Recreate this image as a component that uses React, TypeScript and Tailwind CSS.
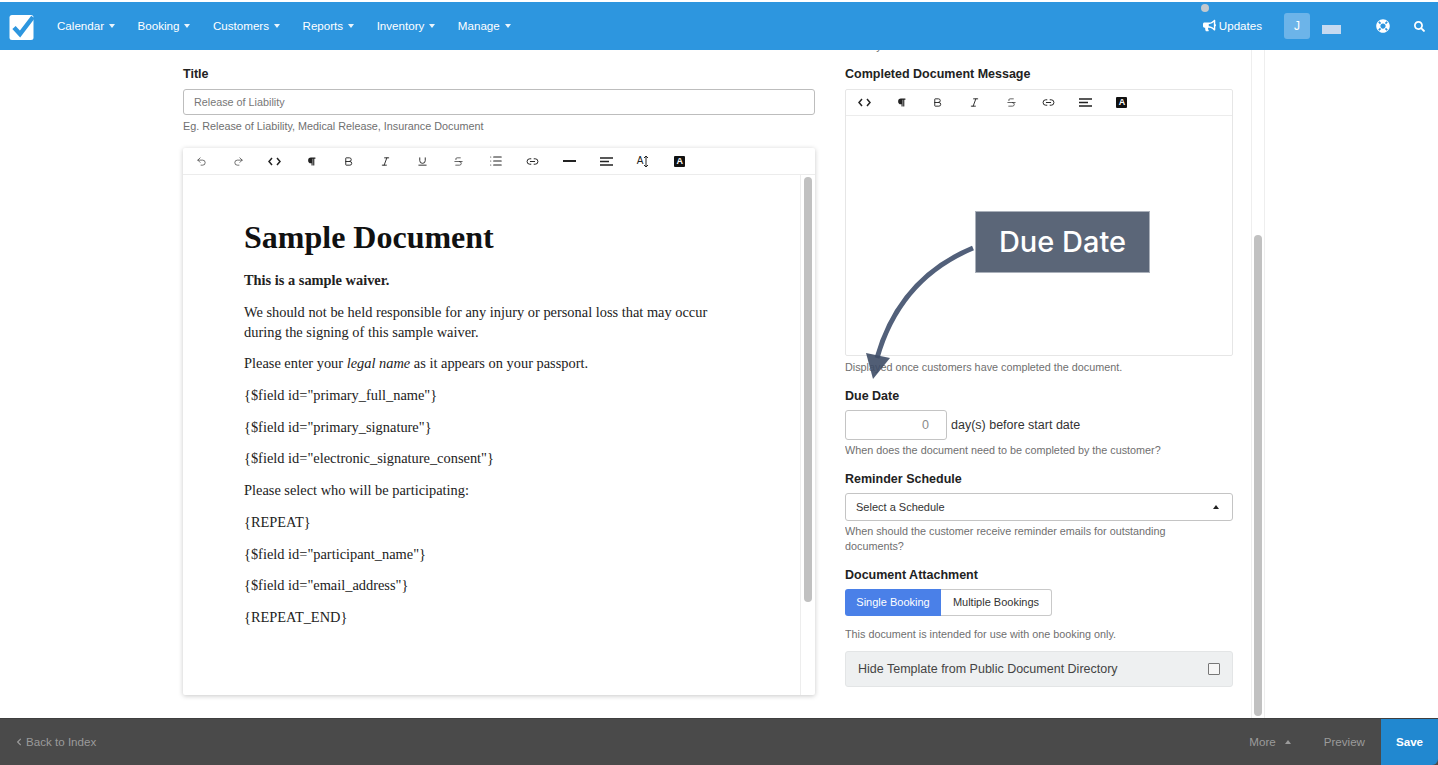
import React from "react";
import { FaBullhorn, FaLifeRing, FaSearch, FaParagraph, FaChevronLeft } from "react-icons/fa";
import { Undo2, Redo2, Bold, Italic, Underline, Strikethrough, List, Link2, AlignLeft } from "lucide-react";

const Caret = ({ up = false, cls = "" }: { up?: boolean; cls?: string }) => (
  <span className={`inline-block w-0 h-0 border-x-[3.5px] border-x-transparent ${up ? "border-b-[4px] border-b-current" : "border-t-[4px] border-t-current"} ${cls}`} />
);

const Code = () => (
  <svg width="13" height="9" viewBox="0 0 13 9" fill="none" stroke="#222" strokeWidth="1.5"><path d="M4 1 1 4.5 4 8M9 1l3 3.5L9 8" /></svg>
);
const HLine = () => <span className="block w-[13px] h-[2px] bg-[#222]" />;
const Align = () => (
  <svg width="13" height="9" viewBox="0 0 13 9" stroke="#222" strokeWidth="1.4"><path d="M0 1h13M0 4.5h9M0 8h13" /></svg>
);
const BulletList = () => <List size={14} strokeWidth={1.8} color="#222" />;
const Size = () => (
  <span className="flex items-center text-[10px] leading-none text-[#222]">A<svg width="6" height="11" viewBox="0 0 6 11" fill="none" stroke="#222" strokeWidth="1"><path d="M3 0v11M1 2l2-2 2 2M1 9l2 2 2-2" /></svg></span>
);
const BlackA = () => (
  <span className="flex items-center justify-center w-[11px] h-[11px] bg-[#111] rounded-[1px] text-white text-[9px] font-bold leading-none">A</span>
);
const ic = { size: 11, strokeWidth: 2, color: "#222" };

const main = [
  <Undo2 key="u" size={11} strokeWidth={1.5} color="#333" />,
  <Redo2 key="r" size={11} strokeWidth={1.5} color="#333" />,
  <Code key="c" />,
  <FaParagraph key="p" size={9} color="#222" />,
  <Bold key="b" {...ic} />,
  <Italic key="i" {...ic} />,
  <Underline key="un" {...ic} />,
  <Strikethrough key="s" {...ic} strokeWidth={1.5} />,
  <BulletList key="l" />,
  <Link2 key="k" size={13} strokeWidth={1.8} color="#222" />,
  <HLine key="h" />,
  <Align key="a" />,
  <Size key="z" />,
  <BlackA key="x" />,
];
const small = [
  <Code key="c" />,
  <FaParagraph key="p" size={9} color="#222" />,
  <Bold key="b" {...ic} />,
  <Italic key="i" {...ic} />,
  <Strikethrough key="s" {...ic} strokeWidth={1.5} />,
  <Link2 key="k" size={13} strokeWidth={1.8} color="#222" />,
  <Align key="a" />,
  <BlackA key="x" />,
];

const Toolbar = ({ items, h }: { items: React.ReactNode[]; h: string }) => (
  <div className={`flex items-center ${h} border-b border-[#ececec]`}>
    {items.map((it, i) => (
      <span key={i} className="w-[36.8px] flex justify-center items-center">{it}</span>
    ))}
  </div>
);

const Label = ({ children }: { children: React.ReactNode }) => (
  <div className="text-[12.5px] leading-[15px] font-bold text-[#222]">{children}</div>
);
const Hint = ({ children, cls = "" }: { children: React.ReactNode; cls?: string }) => (
  <div className={`text-[10.8px] leading-[15px] text-[#6f6f6f] ${cls}`}>{children}</div>
);
const P = ({ children }: { children: React.ReactNode }) => (
  <p className="mb-[11.7px]">{children}</p>
);

const nav = ["Calendar", "Booking", "Customers", "Reports", "Inventory", "Manage"];

export default function App() {
  return (
    <div className="relative h-[765px] w-[1438px] overflow-hidden flex flex-col bg-white font-['Liberation_Sans',sans-serif]">
      <header className="mt-[2px] h-[48px] shrink-0 bg-[#2d96df] flex items-center text-white z-10 relative">
        <svg className="ml-[9px]" width="27" height="28" viewBox="0 0 27 28">
          <rect x="0.5" y="3" width="24" height="25" rx="2.5" fill="#fff" />
          <path d="M5 15.5l6 6.5L24 5" fill="none" stroke="#2d96df" strokeWidth="4.5" />
        </svg>
        <nav className="ml-[21px] flex items-center gap-[22.5px] text-[11.6px]">
          {nav.map((n) => (
            <span key={n} className="flex items-center gap-[5px]">
              {n}
              <Caret cls="text-white/90" />
            </span>
          ))}
        </nav>
        <div className="ml-auto flex items-center">
          <span className="relative flex items-center gap-[3px] text-[11.6px]">
            <span className="absolute -left-[2px] -top-[13px] w-[8px] h-[8px] rounded-full bg-[#c3c9ce]" />
            <FaBullhorn size={13} />
            Updates
          </span>
          <span className="ml-[22px] w-[26px] h-[26px] rounded-[3px] bg-[#6cb4e9] flex items-center justify-center text-[12px]">J</span>
          <span className="ml-[12px] mt-[6px] w-[19px] h-[9px] bg-[#c5d9f0]" />
          <FaLifeRing size={14} className="ml-[35px]" />
          <FaSearch size={11} className="ml-[24px] mr-[13px]" />
        </div>
      </header>

      <main className="flex-1 min-h-0 flex">
        <section className="ml-[183px] w-[632px] pt-[17px]">
          <Label>Title</Label>
          <div className="mt-[7px] h-[26px] border border-[#bdbdbd] rounded-[3px] flex items-center px-[10px] text-[10.8px] text-[#777]">Release of Liability</div>
          <Hint cls="mt-[4px]">Eg. Release of Liability, Medical Release, Insurance Document</Hint>
          <div className="mt-[14px] h-[547px] flex flex-col rounded-[2px] shadow-[0_1px_5px_rgba(0,0,0,0.22)]">
            <Toolbar items={main} h="h-[27px]" />
            <div className="flex-1 min-h-0 flex">
              <div className="flex-1 pl-[61px] pt-[44px] pr-[70px] font-['Liberation_Serif',serif] text-[14.4px] leading-[20px] text-[#222]">
                <h1 className="text-[32px] leading-[36px] font-bold text-[#111] mb-[15px]">Sample Document</h1>
                <P><b>This is a sample waiver.</b></P>
                <P>We should not be held responsible for any injury or personal loss that may occur during the signing of this sample waiver.</P>
                <P>Please enter your <i>legal name</i> as it appears on your passport.</P>
                <P>{'{$field id="primary_full_name"}'}</P>
                <P>{'{$field id="primary_signature"}'}</P>
                <P>{'{$field id="electronic_signature_consent"}'}</P>
                <P>Please select who will be participating:</P>
                <P>{"{REPEAT}"}</P>
                <P>{'{$field id="participant_name"}'}</P>
                <P>{'{$field id="email_address"}'}</P>
                <P>{"{REPEAT_END}"}</P>
              </div>
              <div className="w-[15px] shrink-0 border-l border-[#ededed] pl-[3px] pt-[2px]">
                <div className="w-[8px] h-[425px] rounded-full bg-[#c1c1c1]" />
              </div>
            </div>
          </div>
        </section>

        <section className="ml-[30px] w-[388px] overflow-hidden">
          <Hint cls="-mt-[11px]">Conveys to customers what this document is about.</Hint>
          <div className="mt-[13px]"><Label>Completed Document Message</Label></div>
          <div className="mt-[7px] h-[267px] border border-[#e6e6e6] rounded-[2px] flex flex-col">
            <Toolbar items={small} h="h-[26px]" />
          </div>
          <Hint cls="mt-[4px]">Displayed once customers have completed the document.</Hint>
          <div className="mt-[14px]"><Label>Due Date</Label></div>
          <div className="mt-[6px] flex items-center gap-[4px]">
            <div className="w-[102px] h-[30px] border border-[#c4c4c4] rounded-[3px] flex items-center justify-end pr-[17px] text-[12.5px] text-[#8a8a8a]">0</div>
            <span className="text-[12.5px] text-[#333]">day(s) before start date</span>
          </div>
          <Hint cls="mt-[3px]">When does the document need to be completed by the customer?</Hint>
          <div className="mt-[14px]"><Label>Reminder Schedule</Label></div>
          <div className="mt-[6px] h-[28px] border border-[#c4c4c4] rounded-[3px] flex items-center justify-between pl-[10px] pr-[13px] text-[11px] text-[#333]">
            Select a Schedule
            <Caret up cls="text-[#222]" />
          </div>
          <Hint cls="mt-[3px] pr-[40px]">When should the customer receive reminder emails for outstanding documents?</Hint>
          <div className="mt-[14px]"><Label>Document Attachment</Label></div>
          <div className="mt-[6px] flex h-[27px] w-[207px] text-[11px]">
            <span className="w-[96px] bg-[#4a80e8] text-white rounded-l-[3px] flex items-center justify-center">Single Booking</span>
            <span className="flex-1 border border-l-0 border-[#c9c9c9] rounded-r-[3px] text-[#333] flex items-center justify-center">Multiple Bookings</span>
          </div>
          <Hint cls="mt-[11px]">This document is intended for use with one booking only.</Hint>
          <div className="mt-[9px] h-[36px] bg-[#eef0f1] border border-[#e3e5e6] rounded-[3px] flex items-center justify-between pl-[12px] pr-[12px] text-[12.5px] text-[#444]">
            Hide Template from Public Document Directory
            <span className="w-[12px] h-[12px] border border-[#777] rounded-[1px] bg-[#f6f6f6]" />
          </div>
        </section>

        <div className="ml-[18px] w-[14px] border-x border-[#eeeeee] pl-[2px] pt-[185px] pb-[2px]">
          <div className="w-[8px] h-full rounded-full bg-[#c1c1c1]" />
        </div>
      </main>

      <footer className="h-[47px] shrink-0 bg-[#4a4a4a] border-t border-[#3f3f3f] flex items-center text-[11.6px] text-[#9b9b9b]">
        <span className="ml-[15px] flex items-center gap-[3px]"><FaChevronLeft size={8} />Back to Index</span>
        <span className="ml-auto flex items-center gap-[9px]">More<Caret up /></span>
        <span className="ml-[33px]">Preview</span>
        <span className="ml-[16px] w-[57px] self-stretch bg-[#2188d0] text-white font-bold flex items-center justify-center rounded-br-[6px]">Save</span>
      </footer>

      {/* Annotation laid over the page */}
      <div className="absolute left-[975px] top-[211px] w-[175px] h-[62px] bg-[#5b6678] border border-[#aab0ba] flex items-center justify-center text-white text-[29px] font-medium font-['Inter',sans-serif]">Due Date</div>
      <svg className="absolute left-[860px] top-[240px] pointer-events-none" width="120" height="145" viewBox="860 240 120 145">
        <path d="M973 248C925 268 892 305 877 358" fill="none" stroke="#52607a" strokeWidth="5" />
        <path d="M866 353 890 358 873 379Z" fill="#3e4d66" fillOpacity="0.9" />
      </svg>
    </div>
  );
}
